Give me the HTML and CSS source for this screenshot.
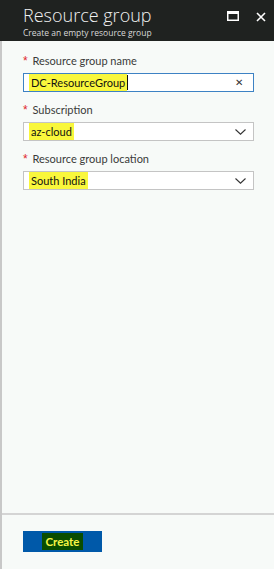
FILE: index.html
```html
<!DOCTYPE html>
<html lang="en">
<head>
  <meta charset="UTF-8">
  <title>Resource group</title>
  <link rel="stylesheet" href="styles.css">
</head>
<body>

<div class="blade">
  <div class="blade-header">
    <div class="titles">
      <div class="title">Resource group</div>
      <div class="subtitle">Create an empty resource group</div>
    </div>
    <div class="header-icons">
      <svg class="icon-max" width="12" height="10" viewBox="0 0 12 10">
        <rect x="0.75" y="0.75" width="10.5" height="8.5" fill="none" stroke="#fff" stroke-width="1.5"/>
        <rect x="0" y="0" width="12" height="3" fill="#fff"/>
      </svg>
      <svg class="icon-close" width="10" height="10" viewBox="0 0 10 10">
        <path d="M1 1 L9 9 M9 1 L1 9" stroke="#fff" stroke-width="1.6"/>
      </svg>
    </div>
  </div>

  <div class="blade-body">
    <div class="field">
      <div class="label"><span class="req">*</span> Resource group name</div>
      <div class="box focused">
        <span class="hl">DC-ResourceGroup</span><span class="caret"></span>
        <span class="clear">&#x2715;</span>
      </div>
    </div>

    <div class="field">
      <div class="label"><span class="req">*</span> Subscription</div>
      <div class="box select">
        <span class="hl">az-cloud</span>
        <svg class="chev" width="11" height="6" viewBox="0 0 11 6">
          <path d="M0.5 0.5 L5.5 5.2 L10.5 0.5" fill="none" stroke="#333" stroke-width="1.1"/>
        </svg>
      </div>
    </div>

    <div class="field">
      <div class="label"><span class="req">*</span> Resource group location</div>
      <div class="box select">
        <span class="hl">South India</span>
        <svg class="chev" width="11" height="6" viewBox="0 0 11 6">
          <path d="M0.5 0.5 L5.5 5.2 L10.5 0.5" fill="none" stroke="#333" stroke-width="1.1"/>
        </svg>
      </div>
    </div>
  </div>

  <div class="blade-footer">
    <button class="create"><span class="create-hl">Create</span></button>
  </div>
</div>

</body>
</html>
```

FILE: styles.css
```css
html, body {
  margin: 0;
  padding: 0;
  height: 100%;
}

body {
  font-family: Lato, "Liberation Sans", sans-serif;
  background-color: #f7faf8;
}

.blade {
  height: 569px;
  display: flex;
  flex-direction: column;
  border-left: 2px solid #c8c8c8;
  box-sizing: border-box;
}

.blade-header {
  height: 41px;
  background-color: #1f2220;
  color: #fff;
  display: flex;
  justify-content: space-between;
  margin-left: -2px;
  padding: 0 8px 0 23px;
  font-family: "Open Sans", "Liberation Sans", sans-serif;
}

.title {
  font-size: 18px;
  font-weight: 300;
  line-height: 22px;
  padding-top: 4px;
  color: #f0f0f0;
}

.subtitle {
  font-size: 8.5px;
  line-height: 12px;
  margin-top: 1px;
  color: #d8d8d8;
}

.header-icons {
  display: flex;
  align-items: flex-start;
  gap: 17px;
  padding-top: 11px;
}

.icon-close {
  margin-top: 1px;
}

.blade-body {
  flex: 1;
  padding: 13px 20px 0 21px;
}

.field {
  margin-bottom: 11px;
}

.label {
  font-size: 11px;
  line-height: 14px;
  color: #3a3a3a;
  margin-bottom: 5px;
}

.req {
  color: #e0262b;
  font-family: "Liberation Sans", sans-serif;
  font-size: 12px;
  margin-right: 2px;
}

.box {
  height: 17px;
  border: 1px solid #c4c4c4;
  background-color: #fff;
  display: flex;
  align-items: center;
  padding: 0 10px 0 5px;
  font-size: 11px;
  color: #111;
}

.box.select {
  padding-right: 7px;
}

.box.focused {
  border-color: #3d82c4;
}

.hl {
  background-color: #f9f73c;
  padding: 1px 2px;
  line-height: 15px;
}

.caret {
  width: 1px;
  height: 15px;
  background-color: #111;
}

.clear {
  margin-left: auto;
  font-size: 10px;
  color: #333;
  font-family: "Liberation Sans", sans-serif;
}

.chev {
  margin-left: auto;
}

.blade-footer {
  height: 56px;
  box-sizing: border-box;
  border-top: 2px solid #d4d4d4;
  padding: 16px 0 0 21px;
}

.create {
  width: 79px;
  height: 21px;
  border: none;
  background-color: #0059a9;
  padding: 0;
  display: flex;
  align-items: center;
  justify-content: center;
}

.create-hl {
  background-color: #0a4d00;
  color: #f6f646;
  font-family: Lato, "Liberation Sans", sans-serif;
  font-weight: bold;
  font-size: 11.5px;
  line-height: 17px;
  padding: 0 4px;
}
```
